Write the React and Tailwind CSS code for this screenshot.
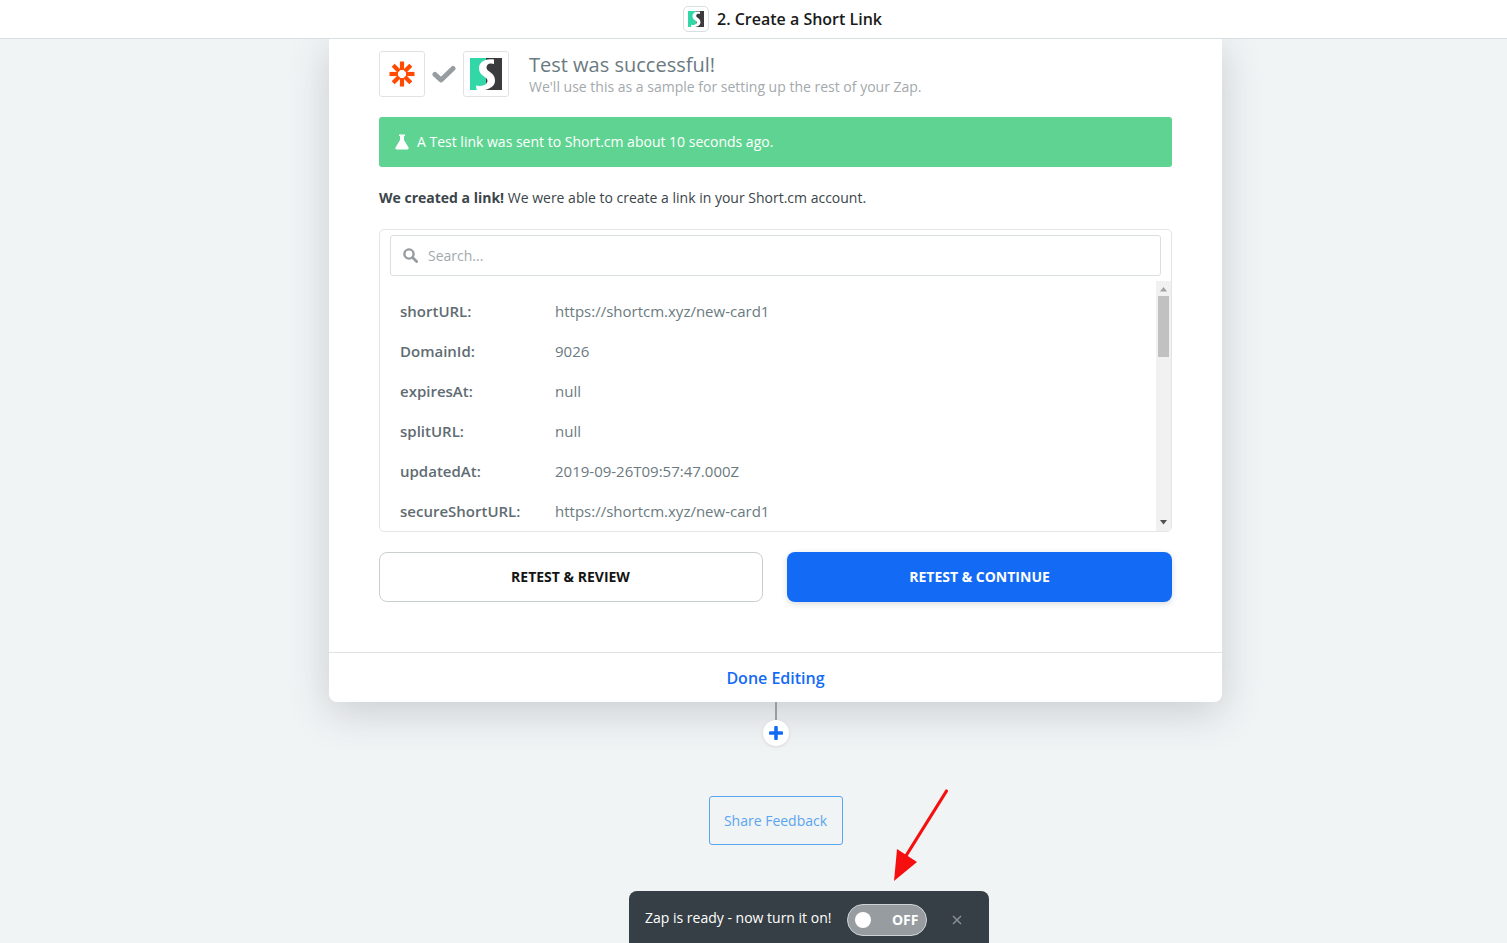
import React from "react";

const rows = [
  ["shortURL:", "https://shortcm.xyz/new-card1"],
  ["DomainId:", "9026"],
  ["expiresAt:", "null"],
  ["splitURL:", "null"],
  ["updatedAt:", "2019-09-26T09:57:47.000Z"],
  ["secureShortURL:", "https://shortcm.xyz/new-card1"],
];

function ShortLogo({ size }) {
  return (
    <svg width={size} height={size} viewBox="0 0 32 32" className="block">
      <rect x="0" y="0" width="16" height="32" fill="#33d6a6" />
      <rect x="16" y="0" width="16" height="32" fill="#3b3b3d" />
      <path d="M24 1.5 C15 0 9 4 9 10 C9 16 13 17.5 16 20 C18.5 22 18 26 13 27.5 C10.5 28.2 8 28 6 27.5 L6.5 31.8 C14 33 25 31 25 22.5 C25 16 20 14.5 17.5 12 C15.5 10 16.5 6 20 5.5 C21.5 5.3 23 5.5 24 6 Z" fill="#fff" />
    </svg>
  );
}

function ZapierMark() {
  return (
    <svg width="26" height="26" viewBox="0 0 26 26" className="block">
      <g stroke="#ff4a00" strokeWidth="4.2" fill="none">
        <path d="M13 0.5 V9" />
        <path d="M13 17 V25.5" />
        <path d="M0.5 13 H9" />
        <path d="M17 13 H25.5" />
        <path d="M4.2 4.2 L10.2 10.2" />
        <path d="M15.8 15.8 L21.8 21.8" />
        <path d="M21.8 4.2 L15.8 10.2" />
        <path d="M10.2 15.8 L4.2 21.8" />
      </g>
    </svg>
  );
}

export default function App() {
  return (
    <div className="relative h-[943px] w-full overflow-hidden bg-[#f1f4f5] font-['Open_Sans',sans-serif]">
      <header className="relative z-10 flex h-[39px] items-center justify-center border-b border-[#d9dfe1] bg-white pl-[58px]">
        <div className="flex h-[26px] w-[26px] items-center justify-center rounded-[5px] border border-[#d9dfe1] bg-white">
          <ShortLogo size={16} />
        </div>
        <span className="ml-2 text-base leading-6 font-semibold text-[#1a1a1a]">2. Create a Short Link</span>
      </header>

      <main className="ml-[329px] w-[893px]">
        <section className="rounded-b-[8px] bg-white shadow-[0_10px_40px_rgba(60,70,75,0.22)]">
          <div className="px-[50px] pt-3">
            <div className="flex h-[46px] items-center">
              <div className="flex h-[46px] w-[46px] items-center justify-center rounded-[3px] border border-[#dfe3e5]">
                <ZapierMark />
              </div>
              <svg width="24" height="20" viewBox="0 0 24 20" className="mx-[7px] block">
                <path d="M3 10.5 L9 16 L21 4.5" fill="none" stroke="#969c9f" strokeWidth="5" strokeLinecap="round" strokeLinejoin="round" />
              </svg>
              <div className="flex h-[46px] w-[46px] items-center justify-center rounded-[3px] border border-[#dfe3e5]">
                <ShortLogo size={32} />
              </div>
              <div className="ml-5">
                <div className="text-[20px] leading-[26px] text-[#6b7a80]">Test was successful!</div>
                <div className="text-sm leading-[18px] text-[#a3a9ac]">We'll use this as a sample for setting up the rest of your Zap.</div>
              </div>
            </div>

            <div className="mt-5 flex h-[50px] items-center rounded-[3px] bg-[#5fd492] pl-4 text-sm text-white">
              <svg width="14" height="16" viewBox="0 0 14 16" className="block">
                <path d="M4 0.5 H10 V2 H9 V6 L13.5 13.5 C14 14.6 13.4 15.5 12.3 15.5 H1.7 C0.6 15.5 0 14.6 0.5 13.5 L5 6 V2 H4 Z" fill="#fff" />
              </svg>
              <span className="ml-2">A Test link was sent to Short.cm about 10 seconds ago.</span>
            </div>

            <p className="mt-[21px] text-sm leading-5 text-[#3b4549]">
              <span className="font-bold">We created a link!</span> We were able to create a link in your Short.cm account.
            </p>

            <div className="mt-[21px] h-[303px] rounded-[5px] border border-[#e3e6e8] bg-white">
              <div className="px-[10px] pt-[5px]">
                <div className="flex h-[41px] items-center rounded-[3px] border border-[#d9dfe1] pl-3">
                  <svg width="15" height="15" viewBox="0 0 15 15" className="block">
                    <circle cx="6" cy="6" r="4.6" fill="none" stroke="#969c9f" strokeWidth="2.4" />
                    <path d="M9.6 9.6 L13.6 13.6" stroke="#969c9f" strokeWidth="2.8" strokeLinecap="round" />
                  </svg>
                  <span className="ml-[10px] text-sm text-[#a3a9ac]">Search...</span>
                </div>
              </div>
              <div className="mt-[5px] flex h-[250px]">
                <div className="min-w-0 flex-1 overflow-hidden pl-5 pt-[10px]">
                  {rows.map(([k, v]) => (
                    <div key={k} className="flex h-10 items-center text-[15px]">
                      <span className="w-[155px] font-semibold text-[#5f6c72]">{k}</span>
                      <span className="text-[#6b7a80]">{v}</span>
                    </div>
                  ))}
                </div>
                <div className="flex w-[15px] flex-col items-center rounded-br-[4px] bg-[#f1f1f1]">
                  <svg width="9" height="5" viewBox="0 0 9 5" className="mt-[6px] block">
                    <path d="M4.5 0 L8 4.5 H1 Z" fill="#a3a3a3" />
                  </svg>
                  <div className="mt-[4px] h-[61px] w-[11px] bg-[#c1c1c1]" />
                  <div className="flex-1" />
                  <svg width="9" height="5" viewBox="0 0 9 5" className="mb-[6px] block">
                    <path d="M1 0 H8 L4.5 4.5 Z" fill="#505050" />
                  </svg>
                </div>
              </div>
            </div>

            <div className="mt-5 flex gap-6 pb-[50px]">
              <button className="h-[50px] w-[384px] rounded-[8px] border border-[#c9ced1] bg-white pr-[1px] text-sm font-bold text-[#141414]">RETEST &amp; REVIEW</button>
              <button className="h-[50px] w-[385px] rounded-[8px] bg-[#136bf5] text-sm font-bold text-white shadow-[0_2px_6px_rgba(60,70,75,0.2)]">RETEST &amp; CONTINUE</button>
            </div>
          </div>
          <div className="flex h-[50px] items-center justify-center border-t border-[#dfe3e5] text-base font-semibold text-[#136bf5]">
            Done Editing
          </div>
        </section>

        <div className="flex flex-col items-center">
          <div className="h-[18px] w-[2px] bg-[#969c9f]" />
          <div className="flex h-[26px] w-[26px] items-center justify-center rounded-full bg-white shadow-[0_1px_3px_rgba(60,70,75,0.15)]">
            <svg width="14" height="14" viewBox="0 0 14 14" className="block">
              <path d="M7 1.5 V12.5 M1.5 7 H12.5" stroke="#136bf5" strokeWidth="3.6" strokeLinecap="round" />
            </svg>
          </div>
          <button className="mt-[50px] h-[49px] w-[134px] rounded-[3px] border border-[#5ba4f0] text-sm text-[#5ba4f0]">Share Feedback</button>
        </div>
      </main>

      <div className="absolute left-[629px] top-[891px] flex h-[52px] w-[360px] items-start rounded-t-[8px] bg-[#363f45] pl-4 pt-[13px]">
        <span className="text-sm leading-7 text-white">Zap is ready - now turn it on!</span>
        <div className="relative ml-4 flex h-8 w-20 items-center justify-end rounded-full border border-[#cfd3d5] bg-[#969c9f] pr-2 text-sm font-bold text-white">
          <span className="absolute left-[7px] top-[7px] h-4 w-4 rounded-full bg-white" />
          OFF
        </div>
        <svg width="10" height="10" viewBox="0 0 10 10" className="ml-[25px] mt-[11px] block">
          <path d="M1 1 L9 9 M9 1 L1 9" stroke="#8d9599" strokeWidth="1.4" />
        </svg>
      </div>

      <svg width="70" height="100" viewBox="0 0 70 100" className="absolute left-[888px] top-[785px] block">
        <path d="M58.5 6 L16 74" stroke="#f50f0f" strokeWidth="3.2" strokeLinecap="round" />
        <path d="M6 96 L9 64 L29 77 Z" fill="#f50f0f" />
      </svg>
    </div>
  );
}
